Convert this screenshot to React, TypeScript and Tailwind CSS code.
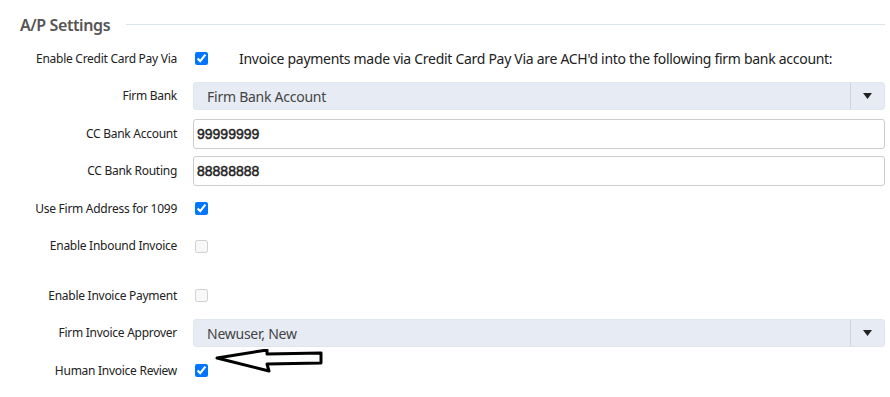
import { ReactNode } from "react";

const Row = ({ label, children, className = "" }: { label: string; children?: ReactNode; className?: string }) => (
  <div className={`flex items-center h-[37.5px] ${className}`}>
    <div className="w-[177px] shrink-0 text-right text-[12px] tracking-[-0.27px] text-[#222]">{label}</div>
    <div className="flex-1 pl-4 pr-[5px] flex items-center relative">{children}</div>
  </div>
);

const Check = ({ checked, disabled }: { checked?: boolean; disabled?: boolean }) => (
  <input
    type="checkbox"
    defaultChecked={checked}
    disabled={disabled}
    className="ml-[2px] w-[13px] h-[13px]"
  />
);

const Select = ({ value }: { value: string }) => (
  <div className="flex items-center w-full h-[28px] rounded-[3px] bg-[#e7ecf4] border border-[#e0e6ee]">
    <span className="flex-1 pl-[13px] text-[14px] tracking-[-0.25px] text-[#444]">{value}</span>
    <div className="w-[34px] h-full border-l border-[#cfd4da] flex items-center justify-center">
      <svg width="9" height="6" viewBox="0 0 9 6">
        <path d="M0 0H9L4.5 6Z" fill="#222" />
      </svg>
    </div>
  </div>
);

const TextBox = ({ value }: { value: string }) => (
  <input
    readOnly
    value={value}
    className="w-full h-[30px] rounded-[3px] border border-[#ccc] bg-white pl-[3px] text-[14px] text-[#222] outline-none [-webkit-text-stroke:0.45px_#222]"
    style={{ fontFamily: "'Liberation Sans', Arial, sans-serif" }}
  />
);

export default function App() {
  return (
    <div className="w-[890px] h-[397px] bg-white overflow-hidden" style={{ fontFamily: "'Noto Sans', sans-serif" }}>
      <div className="flex items-center h-[40px] pl-[20px] pt-[9px]">
        <span className="text-[16px] font-semibold tracking-[-0.4px] text-[#555]">A/P Settings</span>
        <div className="flex-1 ml-4 border-t border-[#dde3ec] mr-[5px]" />
      </div>
      <Row label="Enable Credit Card Pay Via">
        <Check checked />
        <span className="ml-[31px] text-[14px] tracking-[-0.29px] text-[#222]">
          Invoice payments made via Credit Card Pay Via are ACH'd into the following firm bank account:
        </span>
      </Row>
      <Row label="Firm Bank">
        <Select value="Firm Bank Account" />
      </Row>
      <Row label="CC Bank Account">
        <TextBox value="99999999" />
      </Row>
      <Row label="CC Bank Routing">
        <TextBox value="88888888" />
      </Row>
      <Row label="Use Firm Address for 1099">
        <Check checked />
      </Row>
      <Row label="Enable Inbound Invoice">
        <Check disabled />
      </Row>
      <Row label="Enable Invoice Payment" className="mt-[12px]">
        <Check disabled />
      </Row>
      <Row label="Firm Invoice Approver">
        <Select value="Newuser, New" />
      </Row>
      <Row label="Human Invoice Review">
        <Check checked />
        {/* annotation arrow */}
        <svg className="absolute left-[38px] top-[-15px]" width="112" height="26" viewBox="0 0 112 26">
          <path
            d="M2 9 L52 1 L52 5 L106 4 L106 14 L52 15 L54 22 Z"
            fill="none"
            stroke="#000"
            strokeWidth="3"
            strokeLinejoin="round"
          />
        </svg>
      </Row>
    </div>
  );
}
